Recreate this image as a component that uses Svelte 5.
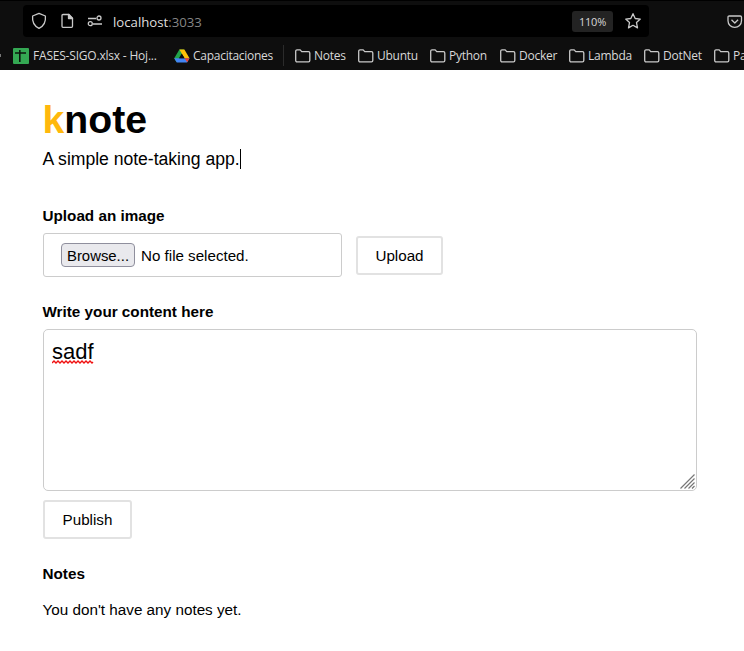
<script>
  const folders = [
    { name: 'Notes', width: 63 },
    { name: 'Ubuntu', width: 72 },
    { name: 'Python', width: 70 },
    { name: 'Docker', width: 69 },
    { name: 'Lambda', width: 75 },
    { name: 'DotNet', width: 70 },
    { name: 'Pa', width: 30 }
  ];
</script>

<div class="window">
  <header>
    <div class="nav">
      <div class="urlbar">
        <svg class="shield" width="16" height="18" viewBox="0 0 16 18"><path d="M8 1.300 14.400 4c.5 5-1 9.700-6.400 12.400C2.600 13.700 1.100 9 1.600 4z" /></svg>
        <svg class="page" width="13" height="16" viewBox="0 0 13 16"><path d="M2 1.500h6l3.500 3.600v8.200a1 1 0 0 1-1 1H2a1 1 0 0 1-1-1V2.500a1 1 0 0 1 1-1z" /><path class="solid" d="M7.500 1.500v4h4z" /></svg>
        <svg class="perm" width="16" height="12" viewBox="0 0 16 12"><path d="M1 3.500h8M6 9h9" /><circle cx="12" cy="3" r="2" /><circle cx="3.300" cy="8.700" r="2" /></svg>
        <span class="url">localhost<i>:3033</i></span>
        <span class="zoom">110%</span>
        <svg class="star" width="18" height="18" viewBox="0 0 18 18"><path d="m9 1.700 2.200 4.800 5.100.6-3.800 3.500 1 5.300L9 13.300l-4.500 2.600 1-5.300L1.700 7.100l5.100-.6z" /></svg>
      </div>
      <svg class="pocket" width="16" height="14" viewBox="0 0 16 14"><path d="M2.300 1h10.900c.8 0 1.300.5 1.300 1.200v3.600a6.700 6.500 0 0 1-13.500 0V2.200C1 1.500 1.500 1 2.300 1z" /><path d="m4.500 4.800 3.300 3.200 3.300-3.200" /></svg>
    </div>
    <div class="bookmarks">
      <div class="dot"></div>
      <div class="mark sheet">
        <svg width="16" height="16" viewBox="0 0 16 16"><rect width="16" height="16" rx="1" fill="#34a853" /><path d="M2 5h11M6.800 2v12" fill="none" stroke="#0c160e" stroke-width="1.600" /></svg>
        <span>FASES-SIGO.xlsx - Hoj...</span>
      </div>
      <div class="mark drive">
        <svg width="16" height="14" viewBox="0 0 16 14"><path d="M5.400.5h4.800L4.900 9.500 2.600 13.200.2 9.300z" fill="#22a34a" /><path d="M5.400.5h5l5.100 8.800h-5z" fill="#ffc107" /><path d="M2.800 13.400.2 9.300h15.300l-2.400 4.100z" fill="#4285f4" /><path d="M10.500 9.300h5l-2.300 4z" fill="#ea4335" /><path d="m7.900 4.900 2.600 4.400H5.300z" fill="#0e0e0e" /></svg>
        <span>Capacitaciones</span>
      </div>
      <div class="rule"></div>
      {#each folders as f}
        <div class="mark folder" style="width: {f.width}px">
          <svg width="16" height="14" viewBox="0 0 16 14"><path d="M.7 11.500v-9.300a1.300 1.300 0 0 1 1.300-1.300h3.200l1.500 1.700h6.800a1.300 1.300 0 0 1 1.300 1.300v7.600a1.300 1.300 0 0 1-1.300 1.300H2a1.300 1.300 0 0 1-1.300-1.300z" /></svg>
          <span>{f.name}</span>
        </div>
      {/each}
    </div>
  </header>

  <main>
    <h1><b>k</b>note</h1>
    <p class="tagline">A simple note-taking app.<span class="caret"></span></p>

    <h2 class="h-upload">Upload an image</h2>
    <div class="upload">
      <div class="file">
        <button class="browse">Browse...</button>
        <span>No file selected.</span>
      </div>
      <button class="action up">Upload</button>
    </div>

    <h2 class="h-write">Write your content here</h2>
    <div class="editor">
      <span class="word">sadf<svg width="42" height="4" viewBox="0 0 42 4"><path d="M0 3l2-2 2 2 2-2 2 2 2-2 2 2 2-2 2 2 2-2 2 2 2-2 2 2 2-2 2 2 2-2 2 2 2-2 2 2 2-2 2 2 1-1" /></svg></span>
      <svg class="grip" width="15" height="15" viewBox="0 0 15 15"><path d="M.5 14.500l14-14M4.500 14.500l10-10M8.500 14.500l6-6M12 14.500l2.500-2.500" /></svg>
    </div>
    <button class="action publish">Publish</button>

    <h2 class="h-notes">Notes</h2>
    <p class="empty">You don't have any notes yet.</p>
  </main>
</div>

<style>
  :global(body) { margin: 0; background: #fff; }
  .window { width: 744px; height: 651px; overflow: hidden; background: #fff; color: #000; font-family: "Liberation Sans", Arial, sans-serif; }
  header { height: 70px; box-sizing: border-box; border-top: 1px solid #000; padding-top: 4px; background: #0e0e0e; color: #d8d8d8; font-family: "Open Sans", "Noto Sans", sans-serif; overflow: hidden; }
  header svg { flex: none; }
  .nav { display: flex; align-items: center; height: 32px; padding-left: 23px; }
  .urlbar { display: flex; align-items: center; flex: none; width: 626px; height: 32px; box-sizing: border-box; padding: 0 7px 0 8px; border-radius: 4px; background: #000; }
  .shield, .page, .perm, .star, .pocket, .folder svg { fill: none; stroke: #c9c9c9; stroke-width: 1.300; stroke-linejoin: round; }
  .page { margin-left: 13.500px; }
  .page .solid { fill: #c9c9c9; }
  .perm { margin-left: 13.500px; }
  .url { margin-left: 10px; font-size: 13.200px; color: #dedede; white-space: nowrap; line-height: 18px; padding-top: 1px; }
  .url i { font-style: normal; color: #858585; }
  .zoom { display: flex; align-items: center; justify-content: center; width: 41px; height: 21px; margin-left: auto; margin-top: 1px; border-radius: 3px; background: #232323; font-size: 11px; letter-spacing: -0.200px; }
  .star { margin-left: 11px; }
  .pocket { margin-left: 78px; margin-top: 1px; }
  .bookmarks { display: flex; align-items: center; box-sizing: border-box; height: 35px; padding-top: 2px; font-size: 12px; }
  .dot { width: 1px; height: 3px; flex: none; background: #777; margin-right: 12px; }
  .mark { display: flex; align-items: center; flex: none; white-space: nowrap; line-height: 18px; }
  .mark span { padding-top: 1px; }
  .sheet { width: 161px; gap: 4px; }
  .sheet span { letter-spacing: -0.200px; }
  .drive { width: 109px; gap: 3px; }
  .drive span { letter-spacing: -0.270px; }
  .rule { width: 1px; height: 21px; margin-right: 11px; flex: none; background: #2b2b2b; }
  .folder { gap: 3px; }
  .folder span { letter-spacing: -0.250px; }

  main { padding: 28px 47px 0 42.500px; }
  h1, h2, p { margin: 0; }
  h1 { font-size: 39.200px; line-height: 44px; font-weight: 700; }
  h1 b { color: #ffb80c; }
  .tagline { display: flex; align-items: center; font-size: 17.600px; letter-spacing: -0.020px; line-height: 20px; margin-top: 7px; height: 20px; }
  .caret { width: 1px; height: 20px; background: #000; }
  h2 { font-size: 15.250px; line-height: 18px; font-weight: 700; }
  .h-upload { margin-top: 38px; }
  .upload { display: flex; align-items: center; height: 44px; margin: 8px 0 0 0.500px; }
  .file { display: flex; align-items: center; width: 299px; height: 44px; box-sizing: border-box; padding-left: 17px; border: 1px solid #ccc; border-radius: 3px; font-size: 15.150px; }
  .file span { padding-top: 1px; margin-left: 6px; }
  button { font-family: inherit; font-size: 15.200px; color: #000; padding: 0; box-sizing: border-box; }
  .browse { width: 74px; height: 24px; padding-top: 1px; border: 1px solid #8f8f9d; border-radius: 4px; background: #e9e9ed; font-size: 14.900px; }
  .action { display: block; border: 2px solid #e2e2e2; border-radius: 3px; background: #fff; }
  .up { width: 87px; height: 39px; margin-left: 14px; padding-top: 1px; }
  .h-write { margin-top: 26px; }
  .editor { position: relative; height: 162px; box-sizing: border-box; margin: 8px 0 0 0.500px; padding: 9px 8px; border: 1px solid #ccc; border-radius: 5px; font-size: 22px; line-height: 26px; }
  .word { position: relative; display: inline-block; }
  .word svg { position: absolute; left: 0; top: 21px; fill: none; stroke: #f01010; stroke-width: 1.400; }
  .grip { position: absolute; right: 1px; bottom: 1px; fill: none; stroke: #777; stroke-width: 1.200; }
  .publish { width: 89px; height: 39px; margin: 9px 0 0 0.500px; }
  .h-notes { margin-top: 26px; }
  .empty { margin-top: 18px; font-size: 15.250px; line-height: 18px; }
</style>
